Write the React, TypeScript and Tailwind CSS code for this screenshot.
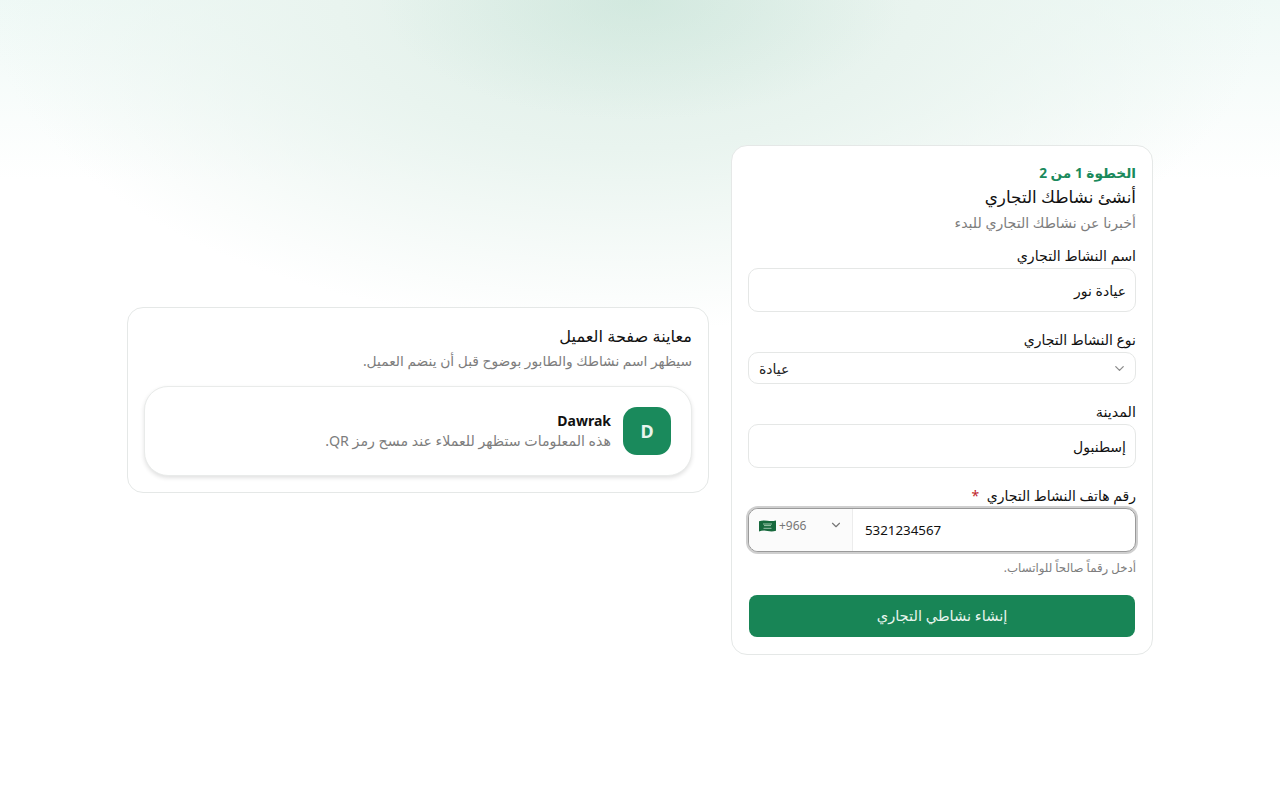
import React from 'react';
import { ChevronDown } from 'lucide-react';

function SaudiFlag() {
  return (
    <svg width="17" height="12" viewBox="0 0 17 12" className="shrink-0">
      <path d="M0 1.2 Q4 0 8.5 0.8 T17 0.4 V10.8 Q13 12 8.5 11 T0 11.6Z" fill="#17693d" />
      <path d="M4 4h9M5 5.6h7" stroke="#a9d0b6" strokeWidth="0.9" />
      <path d="M4.5 8.3h8" stroke="#d5e8dc" strokeWidth="0.7" />
    </svg>
  );
}

function Field({ label, value, labelClass }: { label: string; value: string; labelClass: string }) {
  return (
    <div className="flex flex-col">
      <label className={`${labelClass} leading-[20px] text-[#111] mb-[2px]`}>{label}</label>
      <input
        readOnly
        value={value}
        dir="rtl"
        className="h-[44px] w-full rounded-[10px] border border-[#e5e7e6] bg-white px-[9px] text-[14px] text-[#111] outline-none"
      />
    </div>
  );
}

export default function App() {
  return (
    <div
      dir="rtl"
      className="relative min-h-screen overflow-hidden bg-white font-['Noto_Sans','DejaVu_Sans',sans-serif] flex items-center justify-center"
    >
      {/* خلفية متدرجة */}
      <div className="absolute inset-x-0 top-0 h-[520px] bg-[radial-gradient(ellipse_260px_120px_at_50%_0%,rgba(196,226,213,0.45)_0%,rgba(255,255,255,0)_100%),radial-gradient(ellipse_640px_330px_at_49%_0%,#deeee7_0%,#e9f4ef_45%,rgba(255,255,255,0)_100%),linear-gradient(180deg,#eff9f6_0px,#ffffff_180px)]" />

      <div className="relative flex items-center gap-[22px] w-[1026px]">
        {/* النموذج */}
        <section className="w-[422px] shrink-0 rounded-[16px] border border-[#e5e8e7] bg-white px-[16px] pt-[16px] pb-[17px]">
          <p className="text-[13.7px] leading-[22px] font-bold text-[#1a8a5c]">الخطوة 1 من 2</p>
          <h1 className="text-[16.8px] leading-[26px] text-[#111]">أنشئ نشاطك التجاري</h1>
          <p className="mt-[1px] text-[14.1px] leading-[24px] text-[#7d7d7d]">أخبرنا عن نشاطك التجاري للبدء</p>

          <div className="mt-[11px] flex flex-col gap-[18px]">
            <Field label="اسم النشاط التجاري" value="عيادة نور" labelClass="text-[14.2px]" />

            <div className="flex flex-col">
              <label className="text-[14px] leading-[20px] text-[#111] mb-[2px]">نوع النشاط التجاري</label>
              <div dir="ltr" className="flex h-[32px] items-center justify-between rounded-[10px] border border-[#e5e7e6] bg-white pl-[10px] pr-[8px]">
                <span dir="rtl" className="pt-[1px] text-[14px] text-[#222]">عيادة</span>
                <ChevronDown size={15} className="text-[#8a8a8a]" />
              </div>
            </div>

            <Field label="المدينة" value="إسطنبول" labelClass="text-[14.4px]" />

            <div className="flex flex-col">
              <label className="text-[14px] leading-[20px] text-[#111] mb-[2px]">
                رقم هاتف النشاط التجاري <span className="mr-[4px] text-[#c0262d]">*</span>
              </label>
              <div dir="ltr" className="flex h-[44px] items-stretch overflow-hidden rounded-[10px] border border-[#9a9a9a] bg-white shadow-[0_0_0_2px_#cfcfcf]">
                <div className="flex w-[104px] items-start justify-between border-r border-[#ececec] bg-[#fbfbfb] pt-[9px] pl-[10px] pr-[9px]">
                  <span className="flex items-center gap-[3px] text-[12px] leading-[16px] text-[#777]">
                    <SaudiFlag />
                    +966
                  </span>
                  <ChevronDown size={14} className="text-[#777]" />
                </div>
                <span className="flex items-center px-[12px] pt-[2px] text-[13.33px] text-[#111]">5321234567</span>
              </div>
              <p className="mt-[7px] text-[11.75px] leading-[16px] text-[#7d7d7d]">أدخل رقماً صالحاً للواتساب.</p>
            </div>
          </div>

          <button className="mx-[1px] mt-[20px] block h-[42px] w-[386px] rounded-[8px] bg-[#188556] text-[14.6px] text-[#e8f5ee]">إنشاء نشاطي التجاري</button>
        </section>

        {/* معاينة */}
        <section className="flex-1 rounded-[16px] border border-[#e5e8e7] bg-white p-[16px]">
          <h2 className="text-[16.2px] leading-[24px] text-[#111]">معاينة صفحة العميل</h2>
          <p className="mt-[2px] text-[13.8px] leading-[22px] text-[#7d7d7d]">سيظهر اسم نشاطك والطابور بوضوح قبل أن ينضم العميل.</p>
          <div className="mt-[14px] flex h-[90px] items-center gap-[12px] rounded-[24px] border border-[#e9ebea] bg-white px-[20px] shadow-[0_2px_4px_rgba(0,0,0,0.12)]">
            <div className="flex h-[48px] w-[48px] items-center justify-center rounded-[14px] bg-[#1a8a5c] text-[18px] font-bold text-[#e8f5ee]">D</div>
            <div>
              <p className="text-[14px] leading-[20px] font-bold text-[#111]">Dawrak</p>
              <p className="text-[14.2px] leading-[20px] text-[#7d7d7d]">هذه المعلومات ستظهر للعملاء عند مسح رمز QR.</p>
            </div>
          </div>
        </section>
      </div>
    </div>
  );
}
